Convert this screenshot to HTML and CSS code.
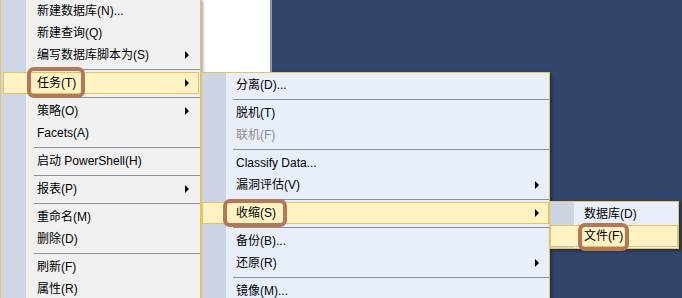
FILE: index.html
```html
<!DOCTYPE html>
<html lang="zh-CN">
<head>
    <meta charset="UTF-8">
    <title>任务 - 收缩 - 文件</title>
    <link rel="stylesheet" href="styles.css">
</head>
<body>
<div class="screen">
    <div class="backdrop">
        <div class="pane-menu"></div>
        <div class="pane-white"></div>
        <div class="pane-split"></div>
        <div class="pane-dark"></div>
    </div>

    <!-- main context menu -->
    <div class="menu menu-main">
        <div class="item">新建数据库(N)...</div>
        <div class="item">新建查询(Q)</div>
        <div class="item">编写数据库脚本为(S)<i class="arrow"></i></div>
        <div class="sep"></div>
        <div class="item active">任务(T)<i class="arrow"></i></div>
        <div class="sep"></div>
        <div class="item">策略(O)<i class="arrow"></i></div>
        <div class="item">Facets(A)</div>
        <div class="sep"></div>
        <div class="item">启动 PowerShell(H)</div>
        <div class="sep"></div>
        <div class="item">报表(P)<i class="arrow"></i></div>
        <div class="sep"></div>
        <div class="item">重命名(M)</div>
        <div class="item">删除(D)</div>
        <div class="sep"></div>
        <div class="item">刷新(F)</div>
        <div class="item">属性(R)</div>
    </div>

    <!-- 任务 submenu -->
    <div class="menu menu-tasks">
        <div class="item">分离(D)...</div>
        <div class="sep"></div>
        <div class="item">脱机(T)</div>
        <div class="item disabled">联机(F)</div>
        <div class="sep"></div>
        <div class="item">Classify Data...</div>
        <div class="item">漏洞评估(V)<i class="arrow"></i></div>
        <div class="sep"></div>
        <div class="item active">收缩(S)<i class="arrow"></i></div>
        <div class="sep"></div>
        <div class="item">备份(B)...</div>
        <div class="item">还原(R)<i class="arrow"></i></div>
        <div class="sep"></div>
        <div class="item">镜像(M)...</div>
    </div>

    <!-- 收缩 submenu -->
    <div class="menu menu-shrink">
        <div class="item">数据库(D)</div>
        <div class="item active">文件(F)</div>
    </div>

    <!-- hand drawn marks -->
    <div class="mark mark-tasks"></div>
    <div class="mark mark-shrink"></div>
    <div class="mark mark-file"></div>
</div>
</body>
</html>
```

FILE: styles.css
```css
* {
    box-sizing: border-box;
}
body {
    margin: 0;
    font-family: "Liberation Sans", "Noto Sans CJK SC", sans-serif;
    font-size: 12px;
    color: #000;
}
.screen {
    position: relative;
    width: 682px;
    height: 298px;
    overflow: hidden;
}
.backdrop {
    display: flex;
    height: 100%;
}
.pane-menu {
    width: 201px;
    background: #f0f0f0;
}
.pane-white {
    width: 69px;
    background: #fff;
}
.pane-split {
    width: 2px;
    background: #8b93a6;
}
.pane-dark {
    flex: 1;
    background: #32456a;
}

.menu {
    position: absolute;
    border: 1px solid #e5c365;
    padding: 1px 0;
    background: linear-gradient(to right, #cdd4e3 24px, #e9eefb 24px);
    box-shadow: 2px 2px 3px rgba(0, 0, 0, 0.35);
}
.menu-main {
    left: 0;
    top: -2px;
    width: 201px;
    background: linear-gradient(to right, #cfd6e5 25px, #f0f0f0 25px);
}
.menu-tasks {
    left: 201px;
    top: 72px;
    width: 349px;
}
.menu-shrink {
    left: 549px;
    top: 201px;
    width: 130px;
}

.item {
    display: flex;
    align-items: center;
    height: 22px;
    line-height: 16px;
    padding: 0 9px 0 33px;
    border: 1px solid transparent;
    white-space: nowrap;
}
.menu-main .item {
    margin: 0 1px 0 2px;
}
.item.active {
    background: #fff3c3;
    border-color: #e5c365;
}
.item.disabled {
    color: #8d8d8d;
}
.arrow {
    margin-left: auto;
    width: 0;
    height: 0;
    border-left: 4px solid #000;
    border-top: 4px solid transparent;
    border-bottom: 4px solid transparent;
}

.sep {
    height: 1px;
    margin: 3px 0 2px 31px;
    background: #8a8f9c;
}
.menu-main .sep {
    margin-left: 33px;
}

.mark {
    position: absolute;
    border: 4px solid #b47857;
    border-radius: 7px;
}
.mark-tasks {
    left: 27px;
    top: 67px;
    width: 58px;
    height: 31px;
}
.mark-shrink {
    left: 223px;
    top: 199px;
    width: 64px;
    height: 28px;
}
.mark-file {
    left: 578px;
    top: 223px;
    width: 51px;
    height: 28px;
}
```
